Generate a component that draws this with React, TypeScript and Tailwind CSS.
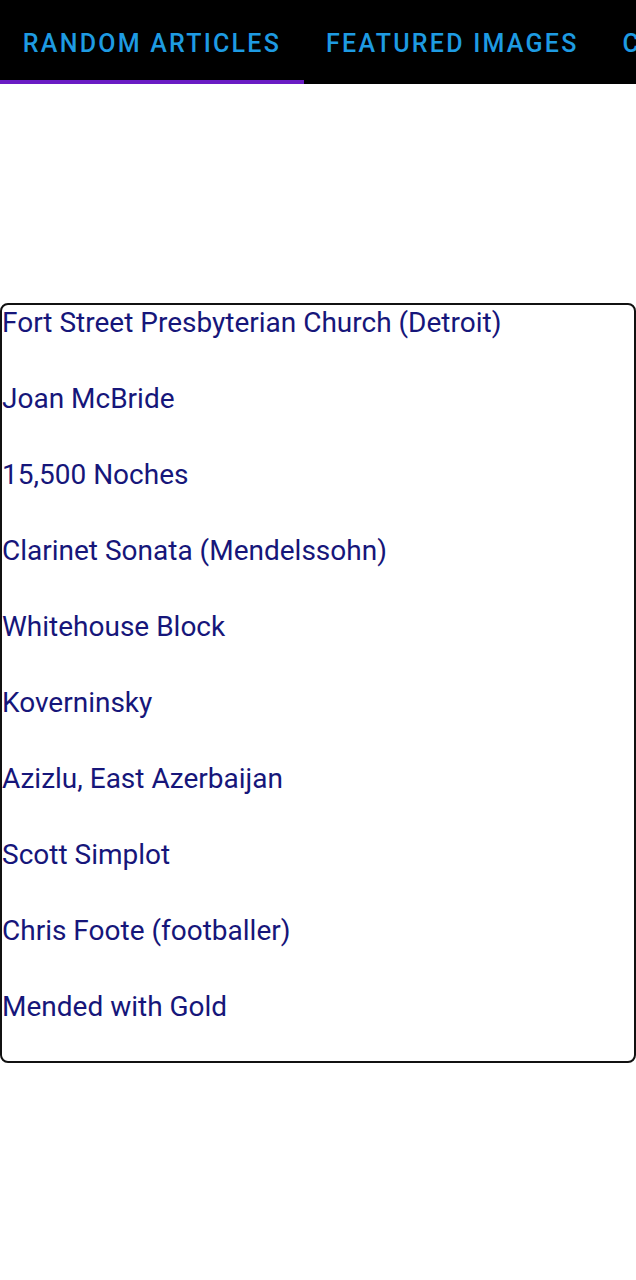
const tabs = ['Random Articles', 'Featured Images', 'Current Events'];

const articles = [
    'Fort Street Presbyterian Church (Detroit)',
    'Joan McBride',
    '15,500 Noches',
    'Clarinet Sonata (Mendelssohn)',
    'Whitehouse Block',
    'Koverninsky',
    'Azizlu, East Azerbaijan',
    'Scott Simplot',
    'Chris Foote (footballer)',
    'Mended with Gold',
];

export default function App() {
    return (
        <div className="min-h-[1280px] bg-white font-['Roboto',sans-serif]">
            {/* Tab bar */}
            <div className="flex h-[84px] overflow-hidden bg-black">
                {tabs.map((tab, i) => (
                    <div
                        key={tab}
                        className={`relative flex shrink-0 items-center justify-center whitespace-nowrap px-[22px] pt-[3px] text-[25px] font-medium uppercase tracking-[0.09em] text-[#1e9be2] ${i === 0 ? 'w-[304px]' : ''}`}
                    >
                        {tab}
                        {i === 0 && <span className="absolute bottom-0 left-0 right-0 h-[4px] bg-[#6a1cc4]" />}
                    </div>
                ))}
            </div>

            {/* Article list */}
            <div className="mt-[219px] h-[760px] rounded-[8px] border-2 border-[#111]">
                {articles.map((title) => (
                    <div key={title} className="h-[76px] text-[28px] leading-[38px] -mt-px mb-px text-[#16167a]">
                        {title}
                    </div>
                ))}
            </div>
        </div>
    );
}
